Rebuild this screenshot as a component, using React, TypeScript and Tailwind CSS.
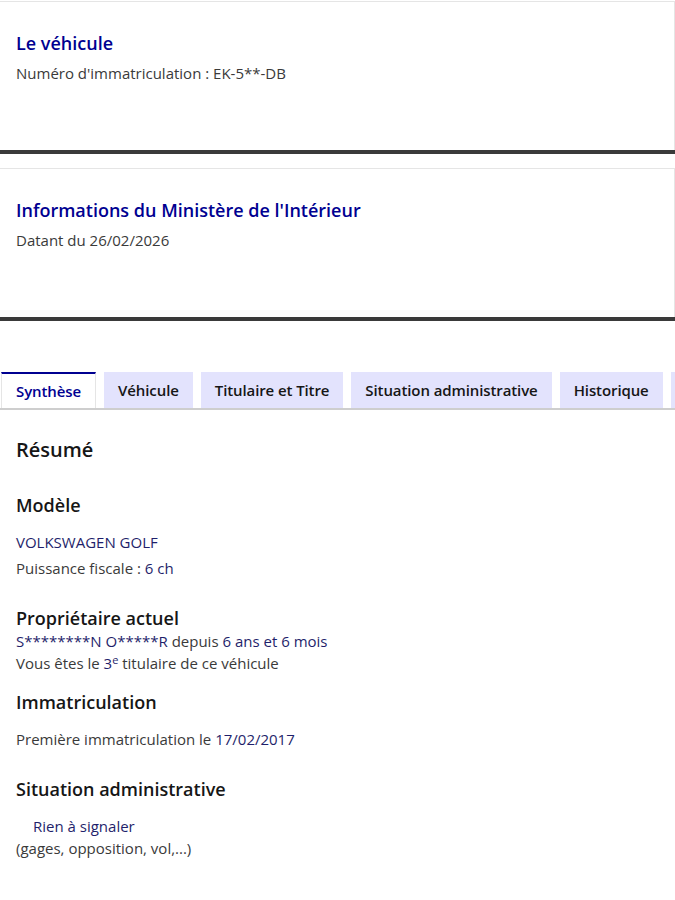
import React from "react";

const font = { fontFamily: '"Open Sans", "Noto Sans", sans-serif' };

function InfoCard({ title, sub }: { title: string; sub: string }) {
  return (
    <div className="border-b-4 border-[#3a3a3a]">
      <div className="h-[149px] border-t border-r border-[#e5e5e5] px-4 pt-[29px]">
        <h2 className="text-[18px] leading-6 font-semibold text-[#000091]">{title}</h2>
        <p className="mt-[6px] text-[15px] leading-6 text-[#3a3a3a]">{sub}</p>
      </div>
    </div>
  );
}

const tabs = ["Synthèse", "Véhicule", "Titulaire et Titre", "Situation administrative", "Historique"];

function Tabs() {
  return (
    <div className="overflow-hidden border-b-2 border-[#cecece]">
      <div className="flex gap-2 pl-px whitespace-nowrap tracking-[-0.1px]">
        {tabs.map((t, i) =>
          i === 0 ? (
            <div
              key={t}
              className="h-9 shrink-0 flex items-center px-[14px] bg-white border-t-2 border-[#000091] border-l border-r border-l-[#e5e5e5] border-r-[#e5e5e5] text-[15px] font-semibold text-[#000091]"
            >
              {t}
            </div>
          ) : (
            <div
              key={t}
              className="h-9 shrink-0 flex items-center px-[14px] bg-[#e3e3fd] text-[15px] font-semibold text-[#161616]"
            >
              {t}
            </div>
          )
        )}
        {/* next tab, scrolled past the right edge */}
        <div className="h-9 w-10 shrink-0 bg-[#e3e3fd]" />
      </div>
    </div>
  );
}

const val = "text-[#1f1f6b]";

export default function App() {
  return (
    <div className="w-[675px] min-h-[900px] bg-white overflow-hidden" style={font}>
      <div className="h-px" />
      <InfoCard title="Le véhicule" sub="Numéro d'immatriculation : EK-5**-DB" />
      <div className="h-[14px]" />
      <InfoCard title="Informations du Ministère de l'Intérieur" sub="Datant du 26/02/2026" />
      <div className="h-[51px]" />
      <Tabs />
      <div className="px-4 pt-[26px] text-[15px] leading-[22px] text-[#3a3a3a]">
        <h2 className="text-[20px] leading-7 font-semibold text-[#161616]">Résumé</h2>

        <h3 className="mt-[29px] text-[18px] leading-6 font-semibold text-[#161616]">Modèle</h3>
        <p className={`mt-[14px] ${val}`}>VOLKSWAGEN GOLF</p>
        <p className="mt-[4px]">
          Puissance fiscale : <span className={val}>6 ch</span>
        </p>

        <h3 className="mt-[27px] text-[18px] leading-6 font-semibold text-[#161616]">Propriétaire actuel</h3>
        <p className={val}>
          S********N O*****R <span className="text-[#3a3a3a]">depuis</span> 6 ans et 6 mois
        </p>
        <p>
          Vous êtes le <span className={val}>3<sup className="text-[11px]">e</sup></span> titulaire de ce véhicule
        </p>

        <h3 className="mt-[16px] text-[18px] leading-6 font-semibold text-[#161616]">Immatriculation</h3>
        <p className="mt-[14px]">
          Première immatriculation le <span className={val}>17/02/2017</span>
        </p>

        <h3 className="mt-[27px] text-[18px] leading-6 font-semibold text-[#161616]">Situation administrative</h3>
        <p className={`mt-[14px] pl-[17px] ${val}`}>Rien à signaler</p>
        <p>(gages, opposition, vol,...)</p>
      </div>
    </div>
  );
}
